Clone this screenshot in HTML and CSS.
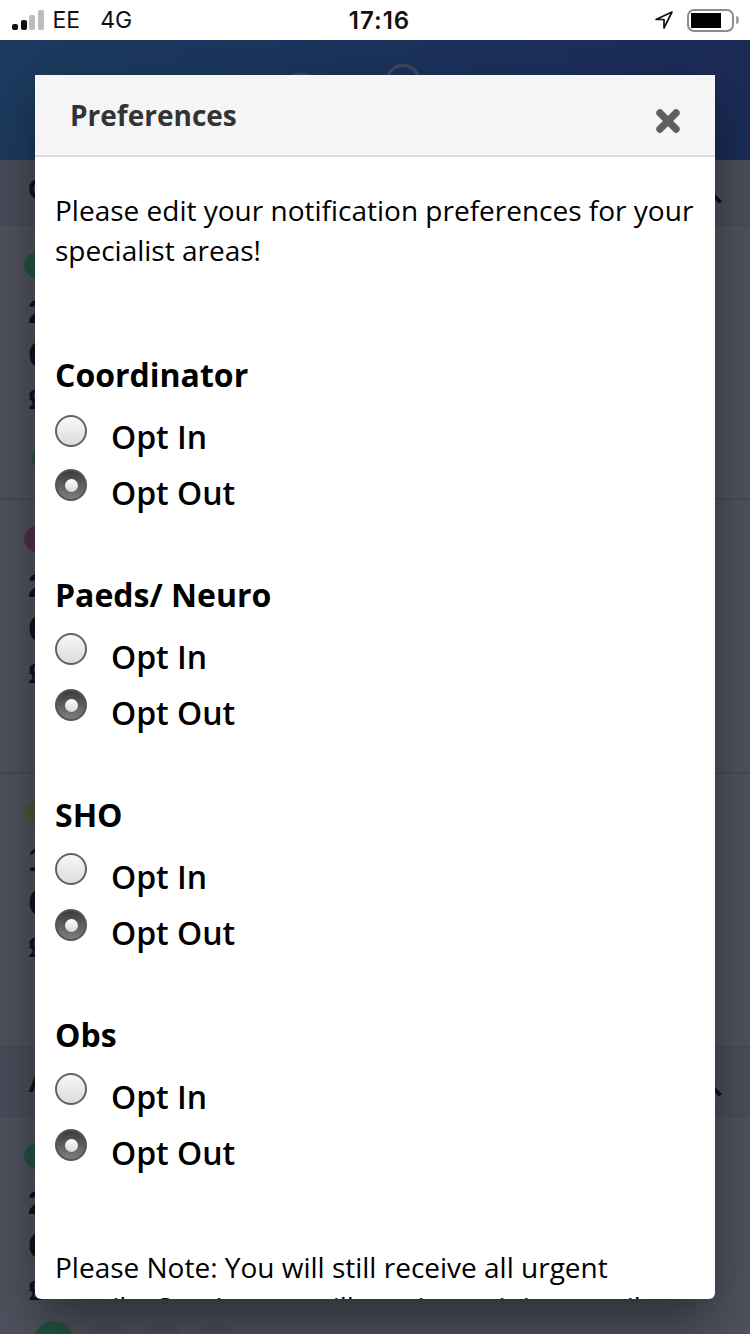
FILE: index.html
```html
<!DOCTYPE html>
<html lang="en">
<head>
<meta charset="utf-8">
<title>Preferences</title>
<link rel="stylesheet" href="styles.css">
</head>
<body>
<div class="page">
  <div class="status">
    <div class="status-left">
      <span class="signal"><i class="b1 on"></i><i class="b2 on"></i><i class="b3"></i><i class="b4"></i></span>
      <span class="carrier">EE</span>
      <span class="net">4G</span>
    </div>
    <div class="clock">17:16</div>
    <div class="status-right">
      <svg class="loc" viewBox="0 0 20 20" width="20" height="20"><path d="M18 2 2 9.5h8V18z" fill="none" stroke="#111" stroke-width="1.7" stroke-linejoin="round"/></svg>
      <span class="batt"><span class="batt-fill"></span></span><span class="batt-tip"></span>
    </div>
  </div>
  <div class="app">
    <div class="hero"><span class="blob"></span><span class="ring"></span></div>
    <div class="section"><span>C</span><b class="chev"></b></div>
    <div class="row"><span class="dot green"></span><p>2</p><p class="big">C</p><p class="small">£</p><span class="dot green low"></span></div>
    <div class="row"><span class="dot red"></span><p>2</p><p class="big">C</p><p class="small">£</p></div>
    <div class="row"><span class="dot yellow"></span><p>1</p><p class="big">C</p><p class="small">£</p></div>
    <div class="section tall"><span>A</span><b class="chev"></b></div>
    <div class="row last"><span class="dot green"></span><p>2</p><p class="big">C</p><p class="small">£</p></div>
    <div class="pills"><span class="pill g"></span><span class="pill"></span><span class="pill"></span><span class="pill"></span></div>
  </div>
  <div class="scrim"></div>
  <div class="modal">
    <div class="modal-head">
      <h1>Preferences</h1>
      <svg class="close" viewBox="0 0 24 24" width="26" height="26"><path d="M4.5 4.5 19.5 19.5M19.5 4.5 4.5 19.5" stroke="#5f5f5f" stroke-width="6.6" stroke-linecap="round"/></svg>
    </div>
    <div class="modal-body">
      <p class="intro">Please edit your notification preferences for your specialist areas!</p>
      <section class="group first">
        <h2>Coordinator</h2>
        <div class="opt"><span class="radio"></span><span>Opt In</span></div>
        <div class="opt"><span class="radio checked"></span><span>Opt Out</span></div>
      </section>
      <section class="group">
        <h2>Paeds/ Neuro</h2>
        <div class="opt"><span class="radio"></span><span>Opt In</span></div>
        <div class="opt"><span class="radio checked"></span><span>Opt Out</span></div>
      </section>
      <section class="group">
        <h2>SHO</h2>
        <div class="opt"><span class="radio"></span><span>Opt In</span></div>
        <div class="opt"><span class="radio checked"></span><span>Opt Out</span></div>
      </section>
      <section class="group">
        <h2>Obs</h2>
        <div class="opt"><span class="radio"></span><span>Opt In</span></div>
        <div class="opt"><span class="radio checked"></span><span>Opt Out</span></div>
      </section>
      <p class="note">Please Note: You will still receive all urgent emails. On-site you will receive training emails.</p>
    </div>
  </div>
</div>
</body>
</html>
```
FILE: styles.css
```css
* { box-sizing: border-box; }
html, body { margin: 0; padding: 0; }
body { width: 750px; height: 1334px; overflow: hidden; background: #fff; font-family: "Open Sans", "Liberation Sans", sans-serif; }
.page { position: relative; width: 750px; height: 1334px; overflow: hidden; }

.status { height: 40px; background: #fff; display: flex; align-items: center; justify-content: space-between; padding: 0 11px 0 12px; position: relative; z-index: 3; color: #111; font-family: "Inter", "Liberation Sans", sans-serif; }
.status-left { display: flex; align-items: center; width: 200px; font-size: 23px; }
.signal { display: flex; align-items: flex-end; gap: 2.5px; height: 20px; margin-right: 9px; }
.signal i { display: block; width: 6px; background: #bdbdbd; border-radius: 2px; }
.signal i.on { background: #111; }
.b1 { height: 6px; }
.b2 { height: 10px; }
.b3 { height: 15px; }
.b4 { height: 20px; }
.net { margin-left: 20px; }
.clock { font-size: 24px; font-weight: 600; letter-spacing: 1px; margin-left: 8px; }
.status-right { display: flex; align-items: center; width: 200px; justify-content: flex-end; }
.loc { margin-right: 13px; }
.batt { width: 47px; height: 23px; border: 2px solid #8d8d8d; border-radius: 7px; padding: 2px; display: block; }
.batt-fill { display: block; width: 30px; height: 15px; background: #000; }
.batt-tip { width: 3px; height: 8px; margin-left: 2px; background: #a5a5a5; border-radius: 0 3px 3px 0; }

.app { position: absolute; left: 0; right: 0; top: 40px; background: #fff; color: #000; font-family: "Liberation Sans", sans-serif; }
.hero { height: 120px; background: linear-gradient(90deg, #34a0ff, #3064dc); display: flex; align-items: flex-start; padding: 24px 0 0 290px; }
.blob { display: block; width: 22px; height: 20px; margin-top: 9px; background: #9fc4f5; border-radius: 6px; }
.ring { display: block; width: 36px; height: 36px; margin-left: 73px; border: 3px solid #c3d4f2; border-radius: 50%; }
.section { height: 66px; background: #e9e9ee; padding: 12px 24px 0 28px; display: flex; justify-content: space-between; font-size: 30px; font-weight: 700; border-bottom: 1px solid #ddd; }
.section.tall { height: 69px; padding-top: 17px; }
.chev { display: block; width: 14px; height: 14px; margin: 22px 7px 0 0; border-top: 4px solid #000; border-left: 4px solid #000; transform: rotate(45deg); }
.row { height: 274px; padding: 26px 0 0 24px; border-bottom: 2px solid #ddd; }
.row.last { height: 204px; border: 0; }
.row p { margin: 15px 0 0 4px; font-size: 34px; font-weight: 700; line-height: 36px; }
.row p.big { font-size: 38px; margin-top: 4px; line-height: 44px; }
.row p.small { font-family: "Liberation Serif", serif; font-size: 30px; margin-top: 4px; }
.dot { display: block; width: 26px; height: 26px; border-radius: 50%; }
.dot.low { margin: 28px 0 0 8px; }
.green { background: #50ff96; }
.red { background: #ff78b0; }
.yellow { background: #ffff78; }
.pills { display: flex; gap: 12px; padding: 0 0 0 33px; }
.pill { width: 42px; height: 42px; border-radius: 50%; background: #f0f0f3; }
.pill.g { background: #50ff96; }

.scrim { position: absolute; left: 0; right: 0; top: 40px; bottom: 0; background: rgba(20, 24, 40, .75); z-index: 1; }

.modal { position: absolute; left: 35px; top: 75px; width: 680px; height: 1224px; background: #fff; border-radius: 0 0 6px 6px; overflow: hidden; z-index: 2; display: flex; flex-direction: column; box-shadow: 0 25px 50px rgba(0, 0, 0, .4); }
.modal-head { flex: none; height: 82px; background: #f5f5f5; border-bottom: 2px solid #ddd; display: flex; align-items: flex-start; justify-content: space-between; padding: 0 34px 0 35px; }
.modal-head h1 { margin: 20px 0 0; font-size: 28px; line-height: 40px; font-weight: 700; color: #333; }
.close { margin-top: 33px; }
.modal-body { padding: 33px 20px 0; color: #000; }
.intro { margin: 0; font-size: 28px; line-height: 40px; }
.group { margin-top: 48px; }
.group.first { margin-top: 85px; }
.group h2 { margin: 0 0 20px; font-size: 32px; line-height: 40px; font-weight: 700; }
.opt { display: flex; align-items: flex-start; gap: 24px; height: 56px; font-size: 32px; font-weight: 600; line-height: 40px; padding-top: 2px; }
.radio { flex: none; display: block; width: 32px; height: 32px; margin-top: -4px; border-radius: 50%; border: 2px solid #626262; background: linear-gradient(#f8f8f8, #dcdcdc); }
.group.first .radio:not(.checked) { margin-top: -2px; }
.radio.checked { display: flex; align-items: center; justify-content: center; border-color: #555; background: linear-gradient(#3c3c3c, #7e7e7e); }
.radio.checked::after { content: ""; display: block; width: 13px; height: 13px; border-radius: 50%; background: linear-gradient(#fff, #d8d8d8); }
.note { margin: 60px 0 0; font-size: 28px; line-height: 40px; }
```
